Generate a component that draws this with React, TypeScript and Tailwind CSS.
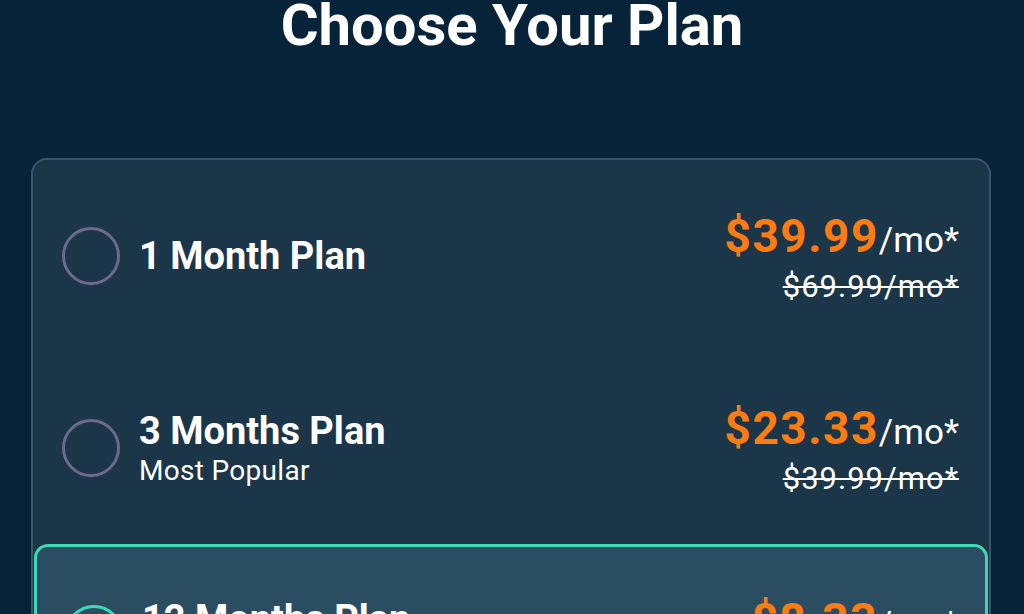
import React from "react";

type Plan = {
  name: string;
  sub?: string;
  price: string;
  old: string;
  selected?: boolean;
};

const plans: Plan[] = [
  { name: "1 Month Plan", price: "$39.99", old: "$69.99/mo*" },
  { name: "3 Months Plan", sub: "Most Popular", price: "$23.33", old: "$39.99/mo*" },
];

function Radio({ selected }: { selected?: boolean }) {
  if (selected) {
    return (
      <div className="w-[58px] h-[58px] rounded-full border-[3px] border-[#3fd8b6] flex items-center justify-center shrink-0">
        <div className="w-[36px] h-[36px] rounded-full bg-[#3fd8b6]" />
      </div>
    );
  }
  return <div className="w-[58px] h-[58px] rounded-full border-[3px] border-[#6c6a8d] shrink-0" />;
}

function Price({ price, old }: { price: string; old: string }) {
  return (
    <div className="flex flex-col items-end pt-[6px]">
      <div className="flex items-baseline leading-[50px]">
        <span className="text-[46px] font-bold text-[#fb7c12] tracking-[1.5px]">{price}</span>
        <span className="text-[35px] text-white">/mo*</span>
      </div>
      <div className="text-[31px] leading-[42px] text-white line-through decoration-[2px] tracking-[1px]">{old}</div>
    </div>
  );
}

function Row({ p }: { p: Plan }) {
  return (
    <div className="flex items-center justify-between h-full pl-[29px] pr-[30px]">
      <div className="flex items-center gap-[19px]">
        <Radio selected={p.selected} />
        <div className="flex flex-col">
          <div className="text-[38px] font-bold leading-[44px] text-white">{p.name}</div>
          {p.sub && <div className="text-[28px] leading-[32px] text-white mt-[2px] tracking-[0.3px]">{p.sub}</div>}
        </div>
      </div>
      <Price price={p.price} old={p.old} />
    </div>
  );
}

export default function App() {
  return (
    <div
      className="w-[1024px] h-[614px] overflow-hidden bg-[#07233a]"
      style={{ fontFamily: "Roboto, 'Liberation Sans', sans-serif" }}
    >
      <h1 className="text-center text-white font-bold text-[58px] leading-[52px] mt-[-1px]">Choose Your Plan</h1>
      <div className="ml-[31px] w-[960px] mt-[107px] rounded-[16px] border-2 border-[#3a566b] bg-[#1b3549]">
        <div className="h-[192px]">
          <Row p={plans[0]} />
        </div>
        <div className="h-[192px]">
          <Row p={plans[1]} />
        </div>
        <div className="mx-[1px] rounded-[14px] border-[3px] border-[#3fd8b6] bg-[#2b4d62] pt-[46px] pb-[60px]">
          <div className="flex items-start justify-between pl-[28px] pr-[27px]">
            <div className="flex items-start gap-[19px]">
              <div className="mt-[12px]">
                <Radio selected />
              </div>
              <div className="flex flex-col">
                <div className="text-[38px] font-bold leading-[44px] text-white mt-[4px]">12 Months Plan</div>
                <div className="text-[28px] leading-[32px] text-white mt-[2px]">Best Value</div>
              </div>
            </div>
            <div className="-mt-[4px]">
              <Price price="$8.33" old="$69.99/mo*" />
            </div>
          </div>
        </div>
      </div>
    </div>
  );
}
